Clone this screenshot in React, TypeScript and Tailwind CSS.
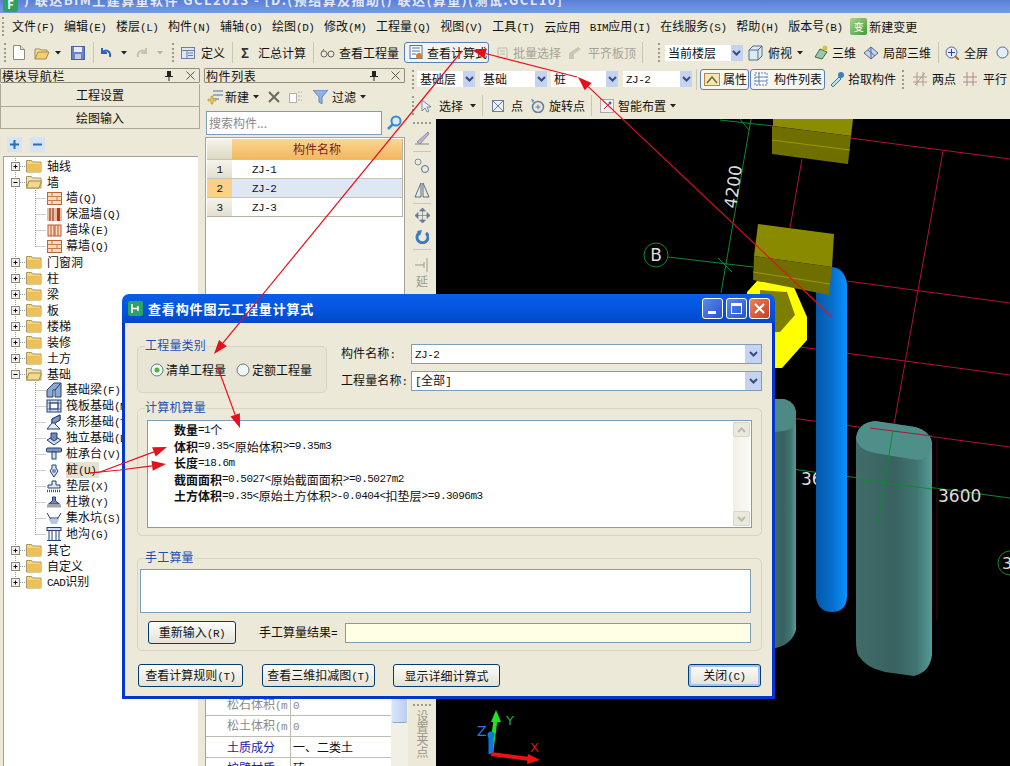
import React from "react";

const Tx = ({ s }: { s: string }) => (
  <>
    {s.split(/([\x21-\x7e]+)/).map((p, i) =>
      /^[\x21-\x7e]+$/.test(p) ? (
        <span key={i} className="font-['Liberation_Mono',monospace] text-[11px] tracking-[-0.5px]">{p}</span>
      ) : (
        <span key={i}>{p}</span>
      )
    )}
  </>
);

const Lb = ({ s, cls = "" }: { s: string; cls?: string }) => (
  <span className={`whitespace-nowrap leading-none text-[12px] ${cls}`}><Tx s={s} /></span>
);

const Ic = ({ w = 16, h = 16, cls = "", children }: { w?: number; h?: number; cls?: string; children: React.ReactNode }) => (
  <svg width={w} height={h} viewBox={`0 0 ${w} ${h}`} className={`shrink-0 ${cls}`}>{children}</svg>
);

const Grip = ({ cls = "" }: { cls?: string }) => (
  <span className={`shrink-0 w-[2px] h-[19px] border-l-2 border-dotted border-[#9c9a88] ${cls}`} />
);
const Sep = ({ cls = "" }: { cls?: string }) => <span className={`shrink-0 w-px h-[21px] bg-[#c9c6b4] ${cls}`} />;
const Caret = ({ cls = "", c = "#222" }: { cls?: string; c?: string }) => (
  <Ic w={6} h={4} cls={cls}><path d="M0 0h6L3 3.5z" fill={c} /></Ic>
);
const ComboArrow = ({ w = 12, h = 16 }: { w?: number; h?: number }) => (
  <span className="shrink-0 flex items-center justify-center bg-[#c3d3f0]" style={{ width: w, height: h }}>
    <Ic w={9} h={6}><path d="M1 1l3.5 3.5L8 1" fill="none" stroke="#3a4d7e" strokeWidth="2" /></Ic>
  </span>
);

const Folder = ({ open }: { open?: boolean }) => (
  <Ic w={16} h={14}>
    <path d="M0.5 3V1.5h5l1 1.5h8.5v10H0.5z" fill={open ? "#f3e3b0" : "#f6d77c"} stroke="#a89860" />
    {open ? <path d="M0.5 13L3 6h12.5L13 13z" fill="#f5d98a" stroke="#a08850" /> : <path d="M1 5h14v8H1z" fill="#eec05a" />}
  </Ic>
);

const Brick = () => (
  <Ic w={15} h={13}>
    <rect x=".5" y=".5" width="14" height="12" fill="#f7dcc0" stroke="#b9653c" />
    <path d="M.5 4.5h14M.5 8.5h14M5 .5v4M10 4.5v4M5 8.5v4" stroke="#c87a50" />
  </Ic>
);
const Insul = () => (
  <Ic w={15} h={13}>
    <rect width="15" height="13" fill="#e8c0a0" />
    <path d="M3 0v13M6 0v13" stroke="#a05a40" strokeWidth="1.5" />
    <rect x="10" width="3" height="13" fill="#b03820" />
  </Ic>
);
const Pier = () => (
  <Ic w={15} h={13}>
    <rect x="1" y="1" width="6" height="11" fill="#f7dcc0" stroke="#c0502c" />
    <rect x="8" y="1" width="6" height="11" fill="#f7dcc0" stroke="#c0502c" />
    <path d="M4 1v11M11 1v11" stroke="#c0502c" />
  </Ic>
);
const F1 = () => (
  <Ic w={16} h={16}>
    <path d="M1 15V8l7-7 7 0v14H9V8H7v7z" fill="#8fa8cf" stroke="#24406e" />
    <path d="M9 8l6-7" stroke="#24406e" />
  </Ic>
);
const F2 = () => (
  <Ic w={16} h={16}>
    <rect x="1" y="2" width="14" height="12" fill="#d5dfef" stroke="#24406e" />
    <rect x="4" y="5" width="8" height="6" fill="#fff" stroke="#24406e" />
    <path d="M1 5h14M1 11h14M4 2v12M12 2v12" stroke="#24406e" strokeWidth=".6" />
  </Ic>
);
const F3 = () => (
  <Ic w={16} h={16}>
    <path d="M1 15l5-6V5l8-4v5l-5 3v1l5 5z" fill="#e6ecf5" stroke="#24406e" />
    <path d="M6 5l8-4v5l-5 3H6z" fill="#7e97c2" stroke="#24406e" />
  </Ic>
);
const F4 = () => (
  <Ic w={16} h={16}>
    <path d="M1 10l7-4 7 4-7 5z" fill="#cfdaec" stroke="#24406e" />
    <path d="M5 3h6v6l-3 2-3-2z" fill="#6f8ab8" stroke="#24406e" />
  </Ic>
);
const F5 = () => (
  <Ic w={16} h={16}>
    <rect x="0.5" y="2" width="15" height="4" rx="1" fill="#7e97c2" stroke="#24406e" />
    <rect x="6" y="6" width="4" height="7" fill="#d5dfef" stroke="#24406e" />
  </Ic>
);
const F6 = () => (
  <Ic w={16} h={16}>
    <path d="M6 3h4v3l2 3-2 3-2 3-2-3-2-3 2-3z" fill="#d5dfef" stroke="#24406e" />
    <circle cx="8" cy="9" r="2" fill="#6f8ab8" />
  </Ic>
);
const F7 = () => (
  <Ic w={16} h={16}>
    <path d="M6 3h4v4h4v3H2V7h4z" fill="#e3e8f2" stroke="#24406e" />
    <path d="M1 13h14" stroke="#555" strokeWidth="2.5" strokeDasharray="1 1" />
  </Ic>
);
const F8 = () => (
  <Ic w={16} h={16}>
    <path d="M6.5 3h3v4l4 3H2.5l4-3z" fill="#6f8ab8" stroke="#24406e" />
    <rect x="1" y="10.5" width="14" height="3" fill="#a5a5a5" />
  </Ic>
);
const F9 = () => (
  <Ic w={16} h={16}>
    <path d="M1 3l3 5h8l3-5M4 8l2 5h4l2-5" fill="none" stroke="#24406e" />
    <path d="M3 9h10l-2 5H5z" fill="#b7c7e0" />
  </Ic>
);
const F10 = () => (
  <Ic w={16} h={16}>
    <rect x="1" y="1.5" width="14" height="3" fill="#d5dfef" stroke="#24406e" />
    <path d="M3 4.5v10M13 4.5v10M6 4.5v10M10 4.5v10M1 14.5h14" stroke="#24406e" fill="none" />
  </Ic>
);

const tree: { n: string; kind: "p" | "o" | "c"; icon?: React.ReactNode; last?: boolean; hl?: boolean }[] = [
  { n: "轴线", kind: "p" },
  { n: "墙", kind: "o" },
  { n: "墙(Q)", kind: "c", icon: <Brick /> },
  { n: "保温墙(Q)", kind: "c", icon: <Insul /> },
  { n: "墙垛(E)", kind: "c", icon: <Pier /> },
  { n: "幕墙(Q)", kind: "c", icon: <Brick />, last: true },
  { n: "门窗洞", kind: "p" },
  { n: "柱", kind: "p" },
  { n: "梁", kind: "p" },
  { n: "板", kind: "p" },
  { n: "楼梯", kind: "p" },
  { n: "装修", kind: "p" },
  { n: "土方", kind: "p" },
  { n: "基础", kind: "o" },
  { n: "基础梁(F)", kind: "c", icon: <F1 /> },
  { n: "筏板基础(M)", kind: "c", icon: <F2 /> },
  { n: "条形基础(T)", kind: "c", icon: <F3 /> },
  { n: "独立基础(D)", kind: "c", icon: <F4 /> },
  { n: "桩承台(V)", kind: "c", icon: <F5 /> },
  { n: "桩(U)", kind: "c", icon: <F6 />, hl: true },
  { n: "垫层(X)", kind: "c", icon: <F7 /> },
  { n: "柱墩(Y)", kind: "c", icon: <F8 /> },
  { n: "集水坑(S)", kind: "c", icon: <F9 /> },
  { n: "地沟(G)", kind: "c", icon: <F10 />, last: true },
  { n: "其它", kind: "p" },
  { n: "自定义", kind: "p" },
  { n: "CAD识别", kind: "p", last: true },
];

const dotted = { stroke: "#9a9a9a", strokeDasharray: "1 1" };

const TreeRow = ({ r }: { r: (typeof tree)[number] }) => {
  const child = r.kind === "c";
  return (
    <div className="flex items-center h-4 shrink-0">
      <svg width={child ? 42 : 22} height={16} viewBox={`0 0 ${child ? 42 : 22} 16`} className="shrink-0">
        <path d={`M11.5 0V${r.n === "CAD识别" ? 8 : 16}`} {...dotted} />
        {child ? (
          <path d={`M31.5 -8V${r.last ? 8.5 : 16}M31.5 8.5H42`} {...dotted} fill="none" />
        ) : (
          <>
            <path d="M16 8.5H22" {...dotted} />
            <rect x="7.5" y="4.5" width="8" height="8" fill="#f2f0e4" stroke="#8a8a80" />
            <path d="M9.5 8.5h4" stroke="#000" />
            {r.kind === "p" && <path d="M11.5 6.5v4" stroke="#000" />}
          </>
        )}
      </svg>
      {child ? (
        <span className="w-4 flex justify-center shrink-0">{r.icon}</span>
      ) : (
        <Folder open={r.kind === "o"} />
      )}
      <span className={`${child ? "ml-[4px]" : "ml-[5px]"} ${r.hl ? "bg-[#e6e2d2] pr-[3px]" : ""} h-4 flex items-center`}>
        <Lb s={r.n} />
      </span>
    </div>
  );
};

const PanelHead = ({ t }: { t: string }) => (
  <div className="h-[15px] flex items-center border border-[#8f8d7c] rounded-[1px] bg-[#ece9d8] pl-px">
    <Lb s={t} cls="tracking-[0.6px]" />
    <span className="flex-1" />
    <Ic w={8} h={10} cls="mr-[13px]"><path d="M2 0h4v5h2v1H4.5v4h-1V6H0V5h2z" fill="#222" /></Ic>
    <Ic w={9} h={9} cls="mr-[4px]"><path d="M.5.5l8 8M8.5.5l-8 8" stroke="#555" /></Ic>
  </div>
);

const Combo = ({ t, w, cls = "" }: { t: string; w: string; cls?: string }) => (
  <span className={`shrink-0 flex items-center justify-between bg-white h-[16px] pl-[3px] ${w} ${cls}`}>
    <Lb s={t} />
    <ComboArrow />
  </span>
);

const XpBtn = ({ t, w, def }: { t: string; w: string; def?: boolean }) => (
  <button className={`shrink-0 h-[23px] ${w} rounded-[3px] border border-[#003c74] bg-gradient-to-b from-[#fdfdfb] to-[#e4e2d6] flex items-center justify-center ${def ? "shadow-[inset_0_0_0_2px_#a9c1ec]" : ""}`}>
    <Lb s={t} cls="text-[#111]" />
  </button>
);

const Group = ({ legend, cls, children }: { legend: string; cls: string; children: React.ReactNode }) => (
  <div className={`relative border border-[#d8d4c2] rounded-[5px] ${cls}`}>
    <span className="absolute left-[7px] -top-[8px] bg-[#ece9d8] leading-none text-[12px] text-[#1f4fb5] tracking-[0.2px]">{legend}</span>
    {children}
  </div>
);

const Radio = ({ on }: { on?: boolean }) => (
  <Ic w={14} h={14}>
    <circle cx="7" cy="7" r="6" fill="#f6f6f0" stroke="#5a7a94" />
    {on && <circle cx="7" cy="7" r="2.5" fill="#4fb04a" />}
  </Ic>
);

const DComboRow = ({ l, v }: { l: string; v: string }) => (
  <div className="flex items-center h-[20px]">
    <Lb s={l} cls="w-[70px] tracking-[0.1px]" />
    <span className="flex-1 h-[20px] border border-[#7f9db9] bg-white flex items-center justify-between pl-[3px]">
      <Lb s={v} />
      <ComboArrow w={16} h={18} />
    </span>
  </div>
);

const formula: [string, string][] = [
  ["数量", "=1个"],
  ["体积", "=9.35<原始体积>=9.35m3"],
  ["长度", "=18.6m"],
  ["截面面积", "=0.5027<原始截面面积>=0.5027m2"],
  ["土方体积", "=9.35<原始土方体积>-0.0404<扣垫层>=9.3096m3"],
];

const Arrow = ({ x1, y1, x2, y2, via }: { x1: number; y1: number; x2: number; y2: number; via?: [number, number] }) => {
  const fx = via ? via[0] : x1;
  const fy = via ? via[1] : y1;
  const a = Math.atan2(y2 - fy, x2 - fx);
  const L = 14;
  const W = 5;
  const bx = x2 - L * Math.cos(a);
  const by = y2 - L * Math.sin(a);
  const nx = -Math.sin(a) * W;
  const ny = Math.cos(a) * W;
  return (
    <>
      <path d={`M${x1} ${y1}${via ? `L${via[0]} ${via[1]}` : ""}L${bx} ${by}`} stroke="#e5101c" strokeWidth="1.2" fill="none" />
      <polygon points={`${x2},${y2} ${bx + nx},${by + ny} ${bx - nx},${by - ny}`} fill="#e5101c" />
    </>
  );
};

const Canvas3D = () => (
  <svg viewBox="436 119 574 647" width="574" height="647" className="block">
    <defs>
      <linearGradient id="blue" x1="0" x2="1" y1="0" y2="0">
        <stop offset="0" stopColor="#0558a8" />
        <stop offset="0.55" stopColor="#0570d0" />
        <stop offset="1" stopColor="#0a92ff" />
      </linearGradient>
      <linearGradient id="teal" x1="0" x2="1" y1="0" y2="0">
        <stop offset="0" stopColor="#416c6a" />
        <stop offset="0.5" stopColor="#386260" />
        <stop offset="0.8" stopColor="#417572" />
        <stop offset="1" stopColor="#549c96" />
      </linearGradient>
    </defs>
    {/* grid */}
    <g fill="none" strokeWidth="1">
      <path d="M751 119L721 293M720 120L773 126M668 257L753 267" stroke="#0e8a30" />
      <path d="M739 118l10 12M718 258l14 14" stroke="#0e8a30" />
      <circle cx="656" cy="255" r="12" stroke="#0e8a30" />
      <path d="M850 138L1010 159M943 151L893 430M802 159L790 228M832 279L1010 303M800 347L1010 375M776 416L1010 447" stroke="#b01430" />
      <path d="M776 467L1010 498" stroke="#0e8a30" />
      <path d="M937 436V620" stroke="#3a0a10" />
      <circle cx="1010" cy="563" r="12" stroke="#0e8a30" />
    </g>
    <text x="656" y="261" fontSize="17" fill="#ddd" textAnchor="middle" fontFamily="DejaVu Sans">B</text>
    <text x="1002" y="569" fontSize="16" fill="#ddd" fontFamily="DejaVu Sans">3</text>
    <text transform="translate(736,209) rotate(-82)" fontSize="17" fill="#ddd" fontFamily="DejaVu Sans">4200</text>
    <text x="801" y="485" fontSize="17" fill="#ddd" fontFamily="DejaVu Sans">36</text>
    <text x="938" y="502" fontSize="17" fill="#ddd" fontFamily="DejaVu Sans">3600</text>

    {/* left teal */}
    <path d="M770 399H784Q796 402 796 415V630Q792 644 776 648H770z" fill="url(#teal)" />
    <path d="M770 399H784Q796 402 796 415V425Q790 432 770 432z" fill="#4d8a85" />
    {/* right teal */}
    <path d="M856 438Q858 423 875 421L915 427Q930 431 932 443V655Q930 672 914 676L885 672Q866 668 858 655Q856 650 856 640z" fill="url(#teal)" />
    <path d="M856 438Q858 423 875 421L915 427Q930 431 932 443Q932 458 917 460L875 453Q858 450 856 438z" fill="#4f8f8a" />
    <path d="M870 428L893 431L932 436" stroke="#b01430" fill="none" />
    <path d="M893 430L877 530M856 479L932 489" stroke="#0e8a30" fill="none" />
    {/* blue */}
    <path d="M816 283Q820 267 832 267Q844 268 847 283V597Q846 612 832 612Q818 612 816 597z" fill="url(#blue)" />
    {/* yellow */}
    <path d="M747 292L757 281L793 285L807 317V340L782 368L775 368L747 340z" fill="#ffff00" />
    <path d="M760 290L787 292L795 315L780 332L775 332L760 320z" fill="#7d7d00" />
    {/* top block */}
    <path d="M773 119H853L851 136L773 126z" fill="#8c8c00" />
    <path d="M772 126L851 136L848 164L772 154z" fill="#6f6f00" />
    <path d="M772 140L850 150" stroke="#999900" fill="none" />
    {/* mid block */}
    <path d="M758 224L834 234L832 267L754 256z" fill="#8a8a00" />
    <path d="M754 256L832 267L829 295L753 280z" fill="#6f6f00" />
    <path d="M753 272L830 284" stroke="#999900" fill="none" />
    {/* axis */}
    <path d="M491 754L496 716" stroke="#1ee61e" strokeWidth="4" fill="none" />
    <polygon points="496,710 491,722 501,722" fill="#1ee61e" />
    <path d="M491 754V735" stroke="#0a78dc" strokeWidth="5" fill="none" />
    <circle cx="491" cy="735" r="3.5" fill="#0a78dc" />
    <path d="M491 754L530 759" stroke="#ee1111" strokeWidth="4" fill="none" />
    <polygon points="540,760 528,754 527,764" fill="#ee1111" />
    <text x="477" y="736" fontSize="14" fill="#2a78e0" fontFamily="DejaVu Sans">Z</text>
    <text x="506" y="725" fontSize="13" fill="#1eae2e" fontFamily="DejaVu Sans">Y</text>
    <text x="530" y="752" fontSize="13" fill="#c81a1a" fontFamily="DejaVu Sans">X</text>
  </svg>
);

export default function App() {
  return (
    <div className="relative w-[1010px] h-[766px] overflow-hidden flex flex-col bg-[#ece9d8] text-[#111] font-['Noto_Sans_CJK_SC','Noto_Sans',sans-serif] text-[12px]">
      {/* title */}
      <div className="h-[13px] shrink-0 overflow-hidden flex items-start bg-gradient-to-b from-[#5a7fd8] to-[#7a9be4]">
        <span className="ml-[3px] -mt-[3px] w-[15px] h-[15px] rounded-[2px] bg-[#2fa060] text-white text-[11px] font-bold leading-[15px] text-center">F</span>
        <span className="ml-[6px] -mt-[7px] text-[13px] font-bold leading-[14px] text-[#e4e9f8] whitespace-nowrap tracking-[1.45px]">) 联达BIM土建算量软件 GCL2013 - [D:(预结算及插助() 联达(算量)(测试.GCL10]</span>
      </div>

      {/* menu */}
      <div className="h-[27px] shrink-0 flex items-center bg-[#ece9d8]">
        <Grip cls="ml-[2px]" />
        <div className="flex items-center gap-[9.7px] ml-[8px]">
          {["文件(F)", "编辑(E)", "楼层(L)", "构件(N)", "辅轴(O)", "绘图(D)", "修改(M)", "工程量(Q)", "视图(V)", "工具(T)", "云应用", "BIM应用(I)", "在线服务(S)", "帮助(H)"].map((m) => (
            <Lb key={m} s={m} />
          ))}
          <Lb s="版本号(B)" cls="mr-[-2px]" />
          <span className="w-[17px] h-[17px] rounded-[2px] bg-gradient-to-br from-[#a7d58a] to-[#3f9a38] text-white text-[10px] leading-[17px] text-center">变</span>
        </div>
        <Lb s="新建变更" cls="ml-[2px]" />
      </div>

      {/* toolbar 1 */}
      <div className="h-[25px] shrink-0 flex items-center bg-[#ece9d8]">
        <Grip cls="ml-[4px]" />
        <Ic w={12} h={15} cls="ml-[7px]"><path d="M.5.5h7l4 4v10H.5z" fill="#fff" stroke="#8a8a80" /><path d="M7.5.5v4h4" fill="#e4e4dc" stroke="#8a8a80" /></Ic>
        <Ic w={16} h={14} cls="ml-[9px]"><path d="M1 13V3h5l1 1h6v2" fill="#f3dfa0" stroke="#a58c50" /><path d="M1 13l3-7h11l-3 7z" fill="#f4cf70" stroke="#a58c50" /></Ic>
        <Caret cls="ml-[5px]" />
        <Ic w={14} h={14} cls="ml-[10px]"><rect x=".5" y=".5" width="13" height="13" fill="#6d82c4" stroke="#4a5f9c" /><rect x="3" y="1" width="8" height="5" fill="#e9edf7" /><rect x="4" y="8" width="6" height="5" fill="#c3cbe2" /></Ic>
        <Sep cls="ml-[8px]" />
        <Ic w={12} h={13} cls="ml-[6px]"><path d="M2 2v5h5" fill="none" stroke="#2c62b8" strokeWidth="2" /><path d="M2 7c3-4 9-3 8 4" fill="none" stroke="#2c62b8" strokeWidth="2" /></Ic>
        <Caret cls="ml-[9px]" />
        <Ic w={12} h={13} cls="ml-[9px]"><path d="M10 2v5H5M10 7C7 3 1 4 2 11" fill="none" stroke="#c4c2b6" strokeWidth="2" /></Ic>
        <Caret cls="ml-[9px]" c="#b5b3a6" />
        <Grip cls="ml-[9px]" />
        <Ic w={14} h={12} cls="ml-[7px]"><rect x=".5" y=".5" width="13" height="11" fill="#dce6f5" stroke="#6a7ea8" /><path d="M1 3.5h12M6 3.5v8M7 6h5M7 8.5h5" stroke="#6a7ea8" /></Ic>
        <Lb s="定义" cls="ml-[6px]" />
        <Sep cls="ml-[7px]" />
        <span className="ml-[8px] w-[9px] text-[13px] font-bold leading-none text-[#333]">Σ</span>
        <Lb s="汇总计算" cls="ml-[8px]" />
        <Sep cls="ml-[7px]" />
        <Ic w={15} h={10} cls="ml-[6px]"><circle cx="4" cy="6" r="3" fill="none" stroke="#666" /><circle cx="11" cy="6" r="3" fill="none" stroke="#666" /><path d="M7 6h1M1 5l3-4" stroke="#666" /></Ic>
        <Lb s="查看工程量" cls="ml-[4px]" />
        <span className="ml-[5px] w-[85px] h-[21px] shrink-0 flex items-center rounded-[3px] border border-[#5a7eb8] bg-[#f5f4ec] pl-[4px]">
          <Ic w={15} h={15}><rect x="1" y=".5" width="12" height="13" fill="#fff" stroke="#4a6ea8" /><path d="M3 3h8M3 6h8M3 9h4" stroke="#4a6ea8" /><circle cx="10" cy="11" r="3" fill="#d08030" /></Ic>
          <Lb s="查看计算式" cls="ml-[3px]" />
        </span>
        <Ic w={13} h={12} cls="ml-[8px]"><path d="M1 1h9v10H1z" fill="none" stroke="#bcbaac" /><path d="M3 4h5M3 7h5" stroke="#bcbaac" /></Ic>
        <Lb s="批量选择" cls="ml-[3px] text-[#a5a397]" />
        <Ic w={14} h={14} cls="ml-[7px]"><path d="M1 13V7l9-6 3 2-7 5v5z" fill="#c9c7ba" /></Ic>
        <Lb s="平齐板顶" cls="ml-[6px] text-[#a5a397]" />
        <Sep cls="ml-[6px]" />
        <Grip cls="ml-[15px]" />
        <Combo t="当前楼层" w="w-[78px]" cls="ml-[5px]" />
        <Ic w={15} h={16} cls="ml-[5px]"><path d="M1 5l4-4h9v10l-4 4H1z" fill="#dfe9f6" stroke="#49708e" /><path d="M1 5h9v10M10 5l4-4" fill="none" stroke="#49708e" /></Ic>
        <Lb s="俯视" cls="ml-[5px]" />
        <Caret cls="ml-[5px]" />
        <Ic w={16} h={15} cls="ml-[10px]"><path d="M2 12l5-8 7 3-5 7z" fill="#9cc7a5" stroke="#3a6a50" /><circle cx="12" cy="3" r="2.5" fill="#e0c030" /></Ic>
        <Lb s="三维" cls="ml-[3px]" />
        <Ic w={16} h={14} cls="ml-[7px]"><path d="M1 7l7-6 7 6-7 6z" fill="#c5d3ea" stroke="#4e6a94" /><path d="M5 4l7 6M8 1v12" stroke="#4e6a94" /></Ic>
        <Lb s="局部三维" cls="ml-[4px]" />
        <Sep cls="ml-[7px]" />
        <Ic w={14} h={14} cls="ml-[6px]"><circle cx="6.5" cy="6.5" r="5.5" fill="#e4ecf8" stroke="#4e6a94" /><path d="M6.5 3v7M3 6.5h7" stroke="#2c4a84" /><path d="M10 10l4 4" stroke="#b06a20" strokeWidth="2" /></Ic>
        <Lb s="全屏" cls="ml-[5px]" />
        <Ic w={14} h={14} cls="ml-[8px]"><circle cx="6.5" cy="6.5" r="5.5" fill="#e4ecf8" stroke="#4e6a94" /></Ic>
      </div>

      {/* main */}
      <div className="flex-1 min-h-0 flex">
        {/* nav panel */}
        <div className="w-[200px] shrink-0 flex flex-col pt-[3px]">
          <PanelHead t="模块导航栏" />
          <button className="mt-px h-[23px] border border-[#aca899] border-t-0 bg-[#ece9d8] text-[12px] leading-none">工程设置</button>
          <button className="h-[22px] border border-[#aca899] border-t-0 bg-[#ece9d8] text-[12px] leading-none">绘图输入</button>
          <div className="h-[27px] flex items-center pl-[7px] gap-2 pt-[3px]">
            <span className="w-[15px] h-[15px] flex items-center justify-center bg-[#d7e3f3] text-[#2a6cb8]"><Ic w={9} h={9}><path d="M4.5 0v9M0 4.5h9" stroke="#2a6cb8" strokeWidth="2" /></Ic></span>
            <span className="w-[15px] h-[15px] flex items-center justify-center bg-[#d7e3f3]"><Ic w={9} h={3}><path d="M0 1.5h9" stroke="#2a6cb8" strokeWidth="2" /></Ic></span>
          </div>
          <div className="flex-1 min-h-0 ml-[3px] mr-[2px] bg-white border-l border-t border-[#a5a395] pt-px overflow-hidden flex flex-col">
            {tree.map((r) => (
              <TreeRow key={r.n} r={r} />
            ))}
          </div>
        </div>

        {/* component list panel */}
        <div className="w-[210px] shrink-0 flex flex-col pt-[3px] pl-[4px] pr-[5px]">
          <PanelHead t="构件列表" />
          <div className="h-[27px] flex items-center shrink-0">
            <Ic w={17} h={17} cls="ml-[2px]"><path d="M7 3h10M7 7h10M7 11h6" stroke="#4c6fa8" /><path d="M5 8v3H2v2h3v3h2v-3h3v-2H7V8z" fill="#e8c75a" stroke="#a08a30" strokeWidth=".5" /></Ic>
            <Lb s="新建" cls="ml-[2px]" />
            <Caret cls="ml-[4px]" />
            <Ic w={12} h={12} cls="ml-[9px]"><path d="M1 1l10 10M11 1L1 11" stroke="#6a6a60" strokeWidth="2" /></Ic>
            <Ic w={14} h={12} cls="ml-[9px]"><rect x=".5" y="2.5" width="7" height="9" fill="#fff" stroke="#b4b2a6" /><path d="M9 1h4M9 5h4M9 9h4" stroke="#b4b2a6" strokeDasharray="2 1" /></Ic>
            <Ic w={15} h={14} cls="ml-[10px]"><path d="M0 0h15L9 7v7l-3-2V7z" fill="#8fb4e4" stroke="#5f88c0" /></Ic>
            <Lb s="过滤" cls="ml-[4px]" />
            <Caret cls="ml-[4px]" />
          </div>
          <div className="h-[25px] flex items-center shrink-0">
            <span className="w-[176px] h-[24px] border border-[#7f9db9] bg-white flex items-center pl-[2px] ml-[2px]"><span className="text-[#8a8a8a] leading-none">搜索构件...</span></span>
            <Ic w={15} h={15} cls="ml-[5px]"><circle cx="9" cy="6" r="4.5" fill="#d7ecfb" stroke="#3b8ad0" strokeWidth="2" /><path d="M5.5 9.5L1 14" stroke="#3b8ad0" strokeWidth="2.5" /></Ic>
          </div>
          <div className="mt-[2px] h-[558px] shrink-0 ml-px border border-[#a5a395] bg-white pl-px pr-px pt-px">
            <div className="grid grid-cols-[25px_170px] grid-rows-[20px_19px_19px_19px] border-b border-r border-[#b5b3a5]">
              <span className="bg-gradient-to-b from-[#f6f4ea] to-[#ded9c4]" />
              <span className="flex items-center justify-center bg-gradient-to-b from-[#fbd693] to-[#f2b85c] text-[#7a1d20]"><Lb s="构件名称" /></span>
              {["ZJ-1", "ZJ-2", "ZJ-3"].map((z, i) => (
                <React.Fragment key={z}>
                  <span className={`flex items-center justify-center border-t border-[#c6c3b3] ${i === 1 ? "bg-[#fbd18a]" : "bg-gradient-to-b from-[#f6f4ea] to-[#e2dfcf]"}`}><Lb s={String(i + 1)} /></span>
                  <span className={`flex items-center pl-[20px] border-t border-[#c6c3b3] ${i === 1 ? "bg-[#dee7f4]" : "bg-white"}`}><Lb s={z} /></span>
                </React.Fragment>
              ))}
            </div>
          </div>
          <div className="flex-1 min-h-0 flex -mr-[3px] ml-px overflow-hidden">
            <div className="flex-1 bg-white border-l border-[#a5a395] overflow-hidden">
              {[
                ["松石体积(m", "0", "text-[#8a8a8a]", "text-[#8a8a8a]"],
                ["松土体积(m", "0", "text-[#8a8a8a]", "text-[#8a8a8a]"],
                ["土质成分", "一、二类土", "text-[#1a1aa8]", "text-[#111]"],
                ["护壁材质", "砖", "text-[#1a1aa8]", "text-[#111]"],
              ].map(([a, b, ca, cb]) => (
                <div key={a} className="grid grid-cols-[85px_1fr] h-[21px] border-b border-[#bdbdb4]">
                  <span className={`flex items-center pl-[21px] border-r border-[#bdbdb4] overflow-hidden ${ca}`}><Lb s={a} /></span>
                  <span className={`flex items-center pl-[2px] ${cb}`}><Lb s={b} /></span>
                </div>
              ))}
            </div>
            <div className="w-[17px] shrink-0 bg-[#f1f0e6] flex flex-col">
              <span className="h-[28px] mx-px bg-gradient-to-r from-[#dbe5f8] to-[#b9cdf2] border-b border-[#8aa4d4] rounded-b-[2px]" />
            </div>
          </div>
        </div>

        {/* work area */}
        <div className="flex-1 min-w-0 flex flex-col">
          <div className="h-[27px] shrink-0 flex items-center pt-[1px]">
            <Grip cls="ml-[2px]" />
            <Combo t="基础层" w="w-[58px]" cls="ml-[3px]" />
            <Combo t="基础" w="w-[67px]" cls="ml-[5px]" />
            <Combo t="桩" w="w-[67px]" cls="ml-[4px]" />
            <Combo t="ZJ-2" w="w-[69px]" cls="ml-[5px]" />
            <Sep cls="ml-[4px]" />
            <span className="ml-[3px] w-[49px] h-[21px] shrink-0 flex items-center rounded-[3px] border border-[#5a7eb8] bg-[#f6f5ee] pl-[3px]">
              <Ic w={16} h={13}><rect x=".5" y=".5" width="15" height="12" fill="#f7e3b4" stroke="#b98a3a" /><path d="M3 10l5-6 5 6" fill="none" stroke="#5e7a30" strokeWidth="1.5" /></Ic>
              <Lb s="属性" cls="ml-[3px]" />
            </span>
            <span className="ml-px w-[75px] h-[21px] shrink-0 flex items-center rounded-[3px] border border-[#5a7eb8] bg-[#f6f5ee] pl-[3px]">
              <Ic w={14} h={14}><path d="M1 1h12v12H1z" fill="#fff" stroke="#5a7eb8" strokeDasharray="2 1" /><path d="M5 1v12M1 5h12M1 9h12" stroke="#5a7eb8" /></Ic>
              <Lb s="构件列表" cls="ml-[6px]" />
            </span>
            <Ic w={16} h={16} cls="ml-[4px]"><path d="M2 14l8-8 2 2-8 8z" fill="#bfe0f4" stroke="#3b78a8" /><circle cx="12" cy="4" r="3" fill="#3f7fb8" /></Ic>
            <Lb s="拾取构件" cls="ml-[3px]" />
            <Grip cls="ml-[6px]" />
            <Ic w={14} h={14} cls="ml-[9px]"><path d="M0 10h14M0 5h14M4 0v14M10 0v14M2 13L12 1" stroke="#b09a8a" /></Ic>
            <Lb s="两点" cls="ml-[5px]" />
            <Ic w={14} h={14} cls="ml-[7px]"><path d="M0 5h14M0 10h14M4 0v14M10 0v14" stroke="#b08a90" /></Ic>
            <Lb s="平行" cls="ml-[6px]" />
          </div>
          <div className="h-[27px] shrink-0 flex items-center">
            <Grip cls="ml-[2px]" />
            <Ic w={12} h={14} cls="ml-[6px]"><path d="M2 1v11l3-3 2 4 2-1-2-4h4z" fill="#e8eef6" stroke="#7c8aa0" /></Ic>
            <Lb s="选择" cls="ml-[7px]" />
            <Caret cls="ml-[7px]" />
            <Sep cls="ml-[6px]" />
            <Ic w={12} h={12} cls="ml-[9px]"><rect x=".5" y=".5" width="11" height="11" fill="#eef2f8" stroke="#6a7ea8" /><path d="M1 1l10 10M11 1L1 11" stroke="#6a7ea8" /></Ic>
            <Lb s="点" cls="ml-[7px]" />
            <Ic w={15} h={15} cls="ml-[7px]"><circle cx="8" cy="9" r="5.5" fill="none" stroke="#5e7ea8" strokeWidth="1.5" /><path d="M8 6.5v5M5.5 9h5" stroke="#5e7ea8" /><path d="M1 1l3 1-1 3z" fill="#5e7ea8" /></Ic>
            <Lb s="旋转点" cls="ml-[4px]" />
            <Sep cls="ml-[6px]" />
            <Ic w={14} h={14} cls="ml-[8px]"><rect x=".5" y=".5" width="13" height="13" fill="#f2f2f2" stroke="#666" strokeDasharray="1 1" /><path d="M4 10l6-6" stroke="#c03030" /><circle cx="10" cy="4" r="1.5" fill="#3068b8" /></Ic>
            <Lb s="智能布置" cls="ml-[4px]" />
            <Caret cls="ml-[4px]" />
          </div>
          <div className="flex-1 min-h-0 flex">
            <div className="w-[26px] shrink-0 flex flex-col items-center pt-[3px] pr-[2px] overflow-hidden text-[#9a9888]">
              <span className="w-[18px] h-[2px] border-t-2 border-dotted border-[#9c9a88]" />
              <Ic w={18} h={16} cls="mt-[6px]"><path d="M2 14h14" stroke="#7a8a9a" /><path d="M4 12L15 2l1 2L7 14z" fill="#c7b0d8" stroke="#6a6a90" strokeWidth=".6" /></Ic>
              <span className="w-[18px] h-px bg-[#c9c6b4] mt-[5px]" />
              <Ic w={16} h={16} cls="mt-[6px]"><circle cx="4" cy="4" r="3" fill="none" stroke="#8090a8" /><circle cx="11" cy="11" r="3.5" fill="none" stroke="#5070a0" /></Ic>
              <Ic w={16} h={16} cls="mt-[8px]"><path d="M7 1L1 15h6zM9 1l6 14H9z" fill="none" stroke="#56708e" /></Ic>
              <span className="w-[18px] h-px bg-[#c9c6b4] mt-[5px]" />
              <Ic w={15} h={15} cls="mt-[4px]"><path d="M7.5 0v15M0 7.5h15M7.5 0l-3 3h6zM7.5 15l-3-3h6zM0 7.5l3-3v6zM15 7.5l-3-3v6z" stroke="#6a7a90" fill="#6a7a90" strokeWidth=".7" /></Ic>
              <Ic w={14} h={14} cls="mt-[7px]"><path d="M11 3a5.5 5.5 0 1 1-7 0" fill="none" stroke="#3f7ac0" strokeWidth="3" /><path d="M7 0L2 1l3 5z" fill="#3f7ac0" /></Ic>
              <span className="w-[18px] h-px bg-[#c9c6b4] mt-[5px]" />
              <Ic w={16} h={16} cls="mt-[7px]"><path d="M13 1v14M1 8h9M10 5v6" stroke="#9c9a88" /></Ic>
              <span className="leading-none mt-[2px] text-[#9a9888]">延</span>
              <span className="flex-1" />
              <span className="w-[18px] h-[2px] border-t-2 border-dotted border-[#9c9a88] mb-[4px]" />
              <span className="[writing-mode:vertical-rl] leading-none text-[12px] text-[#9a9888] mb-[8px]">设置夹点</span>
            </div>
            <div className="flex-1 min-w-0 bg-black overflow-hidden">
              <Canvas3D />
            </div>
          </div>
        </div>
      </div>

      {/* dialog */}
      <div className="absolute z-10 left-[122px] top-[294px] w-[653px] h-[405px] flex flex-col rounded-t-[7px] overflow-hidden">
        <div className="h-[29px] shrink-0 flex items-center bg-gradient-to-b from-[#0a5ee6] via-[#0355e0] to-[#0348c8] pl-[6px] pr-[5px]">
          <span className="w-[15px] h-[15px] rounded-[2px] bg-[#2aa566] flex items-center justify-center">
            <Ic w={11} h={11}><path d="M2 1v9M2 5.5h6M8 3v5" stroke="#fff" strokeWidth="1.5" /></Ic>
          </span>
          <span className="ml-[5px] text-[13px] font-bold leading-none text-white tracking-[0.85px]">查看构件图元工程量计算式</span>
          <span className="flex-1" />
          <span className="w-[21px] h-[21px] rounded-[3px] border border-white bg-gradient-to-br from-[#5a88ef] to-[#2554d0] flex items-end pl-[5px] pb-[4px]"><span className="w-[8px] h-[3px] bg-white" /></span>
          <span className="ml-[3px] w-[21px] h-[21px] rounded-[3px] border border-white bg-gradient-to-br from-[#5a88ef] to-[#2554d0] flex items-center justify-center"><span className="w-[11px] h-[11px] border border-white border-t-[3px]" /></span>
          <span className="ml-[2px] w-[21px] h-[21px] rounded-[3px] border border-white bg-gradient-to-br from-[#e8825e] to-[#c73c1e] flex items-center justify-center"><Ic w={11} h={11}><path d="M1 1l9 9M10 1l-9 9" stroke="#fff" strokeWidth="2" /></Ic></span>
        </div>
        <div className="flex-1 min-h-0 bg-[#ece9d8] border-x-[3px] border-b-[3px] border-[#0336cc] pl-[12px] pr-[10px] flex flex-col">
          <div className="mt-[23px] flex shrink-0">
            <Group legend="工程量类别" cls="w-[190px] h-[47px] flex items-center pl-[12px] bg-[#e8e5d5]">
              <Radio on />
              <Lb s="清单工程量" cls="ml-[2px]" />
              <span className="ml-[10px]"><Radio /></span>
              <Lb s="定额工程量" cls="ml-[2px]" />
            </Group>
            <div className="ml-[14px] -mt-[2px] flex-1 flex flex-col gap-[7px]">
              <DComboRow l="构件名称:" v="ZJ-2" />
              <DComboRow l="工程量名称:" v="[全部]" />
            </div>
          </div>
          <Group legend="计算机算量" cls="mt-[15px] w-[625px] h-[128px] shrink-0">
            <div className="mt-[11px] ml-[9px] w-[605px] h-[108px] border border-[#7f9db9] bg-white flex">
              <div className="flex-1 pl-[26px] pt-px">
                {formula.map(([k, v]) => (
                  <div key={k} className="h-[16.5px] flex items-center whitespace-nowrap leading-none text-[12px]">
                    <span className="font-bold">{k}</span>
                    <Tx s={v} />
                  </div>
                ))}
              </div>
              <div className="w-[17px] shrink-0 mr-px my-px bg-gradient-to-r from-[#f1f0e6] to-[#fafaf6] flex flex-col justify-between">
                <span className="h-[15px] bg-[#ebe9dc] border border-[#d8d6c8] rounded-[2px] flex items-center justify-center"><Ic w={9} h={6}><path d="M1 5l3.5-3.5L8 5" fill="none" stroke="#bdbbac" strokeWidth="2" /></Ic></span>
                <span className="h-[15px] bg-[#ebe9dc] border border-[#d8d6c8] rounded-[2px] flex items-center justify-center"><Ic w={9} h={6}><path d="M1 1l3.5 3.5L8 1" fill="none" stroke="#bdbbac" strokeWidth="2" /></Ic></span>
              </div>
            </div>
          </Group>
          <Group legend="手工算量" cls="mt-[22px] w-[625px] h-[93px] shrink-0">
            <div className="mt-[10px] ml-[2px] w-[611px] h-[44px] border border-[#7f9db9] bg-white" />
            <div className="mt-[8px] flex items-center ml-[10px]">
              <XpBtn t="重新输入(R)" w="w-[88px]" />
              <Lb s="手工算量结果=" cls="ml-[23px]" />
              <span className="ml-[8px] w-[406px] h-[20px] border border-[#7f9db9] bg-[#ffffe3]" />
            </div>
          </Group>
          <div className="mt-[13px] flex items-center shrink-0 pl-px">
            <XpBtn t="查看计算规则(T)" w="w-[105px]" />
            <span className="w-[19px]" />
            <XpBtn t="查看三维扣减图(T)" w="w-[113px]" />
            <span className="w-[18px]" />
            <XpBtn t="显示详细计算式" w="w-[107px]" />
            <span className="w-[188px]" />
            <XpBtn t="关闭(C)" w="w-[73px]" def />
          </div>
        </div>
      </div>

      {/* annotations */}
      <svg viewBox="0 0 1010 766" width="1010" height="766" className="absolute left-0 top-0 z-20 pointer-events-none">
        <Arrow x1={462} y1={51} x2={214} y2={354} />
        <Arrow x1={577} y1={77} x2={472} y2={50} />
        <Arrow x1={832} y1={317} x2={578} y2={77} />
        <Arrow x1={218} y1={368} x2={240} y2={428} />
        <Arrow x1={90} y1={473} via={[100, 472]} x2={167} y2={447} />
        <Arrow x1={90} y1={473} via={[120, 470]} x2={166} y2={464} />
      </svg>
    </div>
  );
}
